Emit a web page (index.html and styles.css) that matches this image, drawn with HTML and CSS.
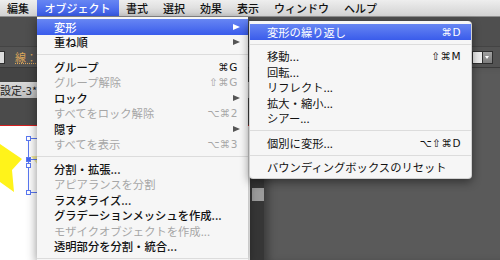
FILE: index.html
```html
<!DOCTYPE html>
<html lang="ja">
<head>
    <meta charset="UTF-8">
    <title>オブジェクト メニュー</title>
    <link rel="stylesheet" href="styles.css">
</head>
<body>
    <div class="menubar">
        <span class="menubar-item">編集</span>
        <span class="menubar-item active">オブジェクト</span>
        <span class="menubar-item">書式</span>
        <span class="menubar-item">選択</span>
        <span class="menubar-item">効果</span>
        <span class="menubar-item">表示</span>
        <span class="menubar-item">ウィンドウ</span>
        <span class="menubar-item">ヘルプ</span>
    </div>

    <div class="app-header"></div>

    <div class="control-bar">
        <span class="field field-stub"></span>
        <span class="stroke-label">線：</span>
        <span class="field field-wide"></span>
        <span class="field field-small"></span>
        <span class="dropdown-btn"></span>
    </div>

    <div class="work-area">
        <div class="doc-window">
            <div class="tab-bar">
                <span class="doc-tab">設定-3*</span>
            </div>
            <div class="ruler"></div>
            <div class="doc-body">
                <div class="canvas">
                    <svg class="artwork" width="48" height="90" viewBox="0 0 48 90">
                        <polygon points="0,18 22,33 12,44 14,66 0,56" fill="#fff31a"/>
                        <polygon points="31,30 38,30 38,39" fill="#f3eaa0"/>
                        <g stroke="#5a78f2" stroke-width="1" fill="none">
                            <line x1="28.5" y1="12" x2="28.5" y2="66"/>
                            <line x1="31" y1="12.5" x2="48" y2="12.5"/>
                            <line x1="31" y1="33.5" x2="48" y2="33.5"/>
                            <line x1="31" y1="66.5" x2="48" y2="66.5"/>
                        </g>
                        <g stroke="#5a78f2" stroke-width="1" fill="#fff">
                            <rect x="26.5" y="10.5" width="4" height="4"/>
                            <rect x="26.5" y="37.5" width="4" height="4"/>
                            <rect x="26.5" y="64.5" width="4" height="4"/>
                            <rect x="26.5" y="31.5" width="4" height="4" fill="#4466f0"/>
                        </g>
                    </svg>
                </div>
                <div class="scrollbar">
                    <div class="scroll-thumb"></div>
                </div>
            </div>
        </div>
        <div class="pasteboard"></div>
    </div>

    <div class="menu main-menu">
        <div class="menu-item highlighted"><span class="label">変形</span><span class="arrow"></span></div>
        <div class="menu-item"><span class="label">重ね順</span><span class="arrow"></span></div>
        <div class="menu-sep"></div>
        <div class="menu-item"><span class="label">グループ</span><span class="shortcut">⌘G</span></div>
        <div class="menu-item disabled"><span class="label">グループ解除</span><span class="shortcut">⇧⌘G</span></div>
        <div class="menu-item"><span class="label">ロック</span><span class="arrow"></span></div>
        <div class="menu-item disabled"><span class="label">すべてをロック解除</span><span class="shortcut">⌥⌘2</span></div>
        <div class="menu-item"><span class="label">隠す</span><span class="arrow"></span></div>
        <div class="menu-item disabled"><span class="label">すべてを表示</span><span class="shortcut">⌥⌘3</span></div>
        <div class="menu-sep"></div>
        <div class="menu-item"><span class="label">分割・拡張...</span></div>
        <div class="menu-item disabled"><span class="label">アピアランスを分割</span></div>
        <div class="menu-item"><span class="label">ラスタライズ...</span></div>
        <div class="menu-item"><span class="label">グラデーションメッシュを作成...</span></div>
        <div class="menu-item disabled"><span class="label">モザイクオブジェクトを作成...</span></div>
        <div class="menu-item"><span class="label">透明部分を分割・統合...</span></div>
        <div class="menu-sep"></div>
    </div>

    <div class="menu submenu">
        <div class="menu-item highlighted"><span class="label">変形の繰り返し</span><span class="shortcut">⌘D</span></div>
        <div class="menu-sep"></div>
        <div class="menu-item"><span class="label">移動...</span><span class="shortcut">⇧⌘M</span></div>
        <div class="menu-item"><span class="label">回転...</span></div>
        <div class="menu-item"><span class="label">リフレクト...</span></div>
        <div class="menu-item"><span class="label">拡大・縮小...</span></div>
        <div class="menu-item"><span class="label">シアー...</span></div>
        <div class="menu-sep"></div>
        <div class="menu-item"><span class="label">個別に変形...</span><span class="shortcut">⌥⇧⌘D</span></div>
        <div class="menu-sep"></div>
        <div class="menu-item"><span class="label">バウンディングボックスのリセット</span></div>
    </div>
</body>
</html>
```

FILE: styles.css
```css
:root {
    --menu-blue: linear-gradient(#6786f3, #3a5ceb);
    --menu-bg: #f6f6f6;
    --app-gray: #535353;
    --disabled: #a6a6a6;
}

* {
    box-sizing: border-box;
}

body {
    margin: 0;
    width: 500px;
    height: 260px;
    overflow: hidden;
    position: relative;
    background: var(--app-gray);
    font-family: "Noto Sans CJK JP", "Noto Sans", sans-serif;
    color: #111;
}

/* menu bar */
.menubar {
    display: flex;
    height: 17px;
    background: linear-gradient(#eeeeee, #d2d2d2);
    border-bottom: 1px solid #8e8e8e;
    font-size: 11px;
    line-height: 16px;
}

.menubar-item {
    padding: 0 7.5px;
    color: #111;
    font-weight: 500;
}

.menubar-item:first-child {
    padding-left: 7px;
}

.menubar-item.active {
    padding: 0 8px;
    background: var(--menu-blue);
    color: #fff;
}

/* illustrator window behind the menus */
.app-header {
    height: 30px;
    background: #4f4f4f;
    border-bottom: 1px solid #444;
}

.control-bar {
    display: flex;
    align-items: center;
    height: 21px;
    background: var(--app-gray);
    border-bottom: 1px solid #3a3a3a;
}

.field {
    height: 13px;
    background: #dcdcdc;
    border: 1px solid #2e2e2e;
}

.field-stub {
    width: 5px;
    border-left: none;
}

.stroke-label {
    margin-left: 10px;
    font-size: 11px;
    line-height: 13px;
    color: #dda65a;
    text-decoration: underline dotted #dda65a;
}

.field-wide {
    width: 120px;
}

.field-small {
    width: 11px;
    margin-left: auto;
    background: #ececec;
}

.dropdown-btn {
    position: relative;
    width: 10px;
    height: 13px;
    margin-right: 7px;
    background: linear-gradient(#a0a0a0, #7c7c7c);
    border: 1px solid #2e2e2e;
    border-left: none;
}

.dropdown-btn::after {
    content: "";
    position: absolute;
    left: 2px;
    top: 4px;
    border-top: 3px solid #fff;
    border-left: 2.5px solid transparent;
    border-right: 2.5px solid transparent;
}

.work-area {
    display: flex;
    height: 192px;
}

.doc-window {
    width: 264px;
    display: flex;
    flex-direction: column;
}

.tab-bar {
    height: 30px;
    display: flex;
    align-items: flex-end;
    background: #444;
}

.doc-tab {
    flex: 1;
    height: 16px;
    background: linear-gradient(#d9d9d9, #bdbdbd);
    font-size: 11px;
    line-height: 16px;
    color: #222;
    white-space: nowrap;
}

.ruler {
    height: 28px;
    background: #4b4b4b;
    border-bottom: 1px solid #d62020;
}

.doc-body {
    flex: 1;
    display: flex;
}

.canvas {
    flex: 1;
    position: relative;
    background: #fff;
}

.artwork {
    position: absolute;
    left: 0;
    top: 0;
}

.scrollbar {
    width: 14px;
    background: #363636;
    padding: 62px 0 0 2px;
}

.scroll-thumb {
    height: 13px;
    background: #9c9c9c;
}

.pasteboard {
    flex: 1;
    background: #5a5a5a;
    box-shadow: inset 8px 0 8px -4px rgba(0, 0, 0, 0.35);
}

/* menus */
.menu {
    position: absolute;
    background: var(--menu-bg);
    font-size: 11.3px;
    box-shadow: 0 3px 10px rgba(0, 0, 0, 0.45);
}

.main-menu {
    left: 37px;
    top: 17px;
    width: 211px;
    height: 243px;
    padding-top: 2px;
    overflow: hidden;
    font-weight: 500;
}

.submenu {
    left: 249px;
    top: 21px;
    width: 223px;
    padding: 3px 0;
    border-radius: 0 4px 4px 4px;
    border: 1px solid rgba(0, 0, 0, 0.15);
    border-top: none;
}

.menu-item {
    display: flex;
    align-items: center;
    height: 15.5px;
    padding: 0 8px 0 17px;
    white-space: nowrap;
}

.label {
    flex: 1;
}

.shortcut {
    margin-right: 2px;
    font-family: "DejaVu Sans", sans-serif;
    font-size: 10.5px;
    font-weight: normal;
    letter-spacing: 0.5px;
}

.arrow {
    border-left: 7px solid #555;
    border-top: 3.5px solid transparent;
    border-bottom: 3.5px solid transparent;
}

.menu-item.highlighted {
    background: var(--menu-blue);
    color: #fff;
}

.menu-item.highlighted .arrow {
    border-left-color: #fff;
}

.menu-item.disabled {
    color: var(--disabled);
    font-weight: normal;
}

.menu-sep {
    height: 1px;
    margin: 4px 0;
    background: #dcdcdc;
}
```
